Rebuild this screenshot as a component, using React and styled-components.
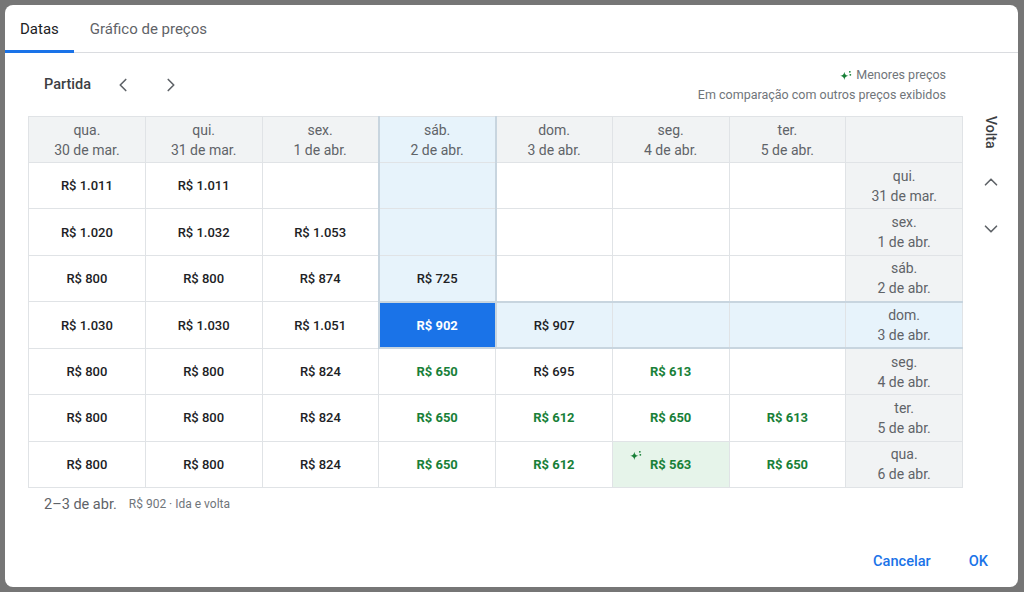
import React from 'react';
import styled, { createGlobalStyle, css } from 'styled-components';
import { ChevronLeft, ChevronRight, ChevronUp, ChevronDown } from 'lucide-react';

const Global = createGlobalStyle`
  html, body { margin: 0; padding: 0; background: #767676; }
  body { font-family: Roboto, "Noto Sans", Arial, sans-serif; }
  * { box-sizing: border-box; }
`;

const Page = styled.div`
  width: 1024px;
  height: 592px;
  padding: 5px 6px 5px 5px;
  background: #767676;
`;

const Dialog = styled.div`
  width: 1013px;
  height: 582px;
  background: #fff;
  border-radius: 8px;
  display: flex;
  flex-direction: column;
  overflow: hidden;
`;

const Tabs = styled.div`
  display: flex;
  height: 48px;
  border-bottom: 1px solid #dadce0;
`;

const Tab = styled.div`
  display: flex;
  align-items: center;
  padding: 2px ${p => (p.$first ? '15px' : '16px')} 0;
  margin-bottom: -1px;
  font-size: 15px;
  color: ${p => (p.$active ? '#202124' : '#5f6368')};
  border-bottom: 3px solid ${p => (p.$active ? '#1a73e8' : 'transparent')};
`;

const Content = styled.div`
  display: flex;
  padding-left: 23px;
`;

const Main = styled.div`
  width: 935px;
  display: flex;
  flex-direction: column;
`;

const TopBar = styled.div`
  height: 63px;
  display: flex;
  align-items: center;
  justify-content: space-between;
  padding: 0 17px 0 16px;
`;

const Nav = styled.div`
  display: flex;
  align-items: center;
`;

const NavLabel = styled.span`
  font-size: 14.5px;
  color: #3c4043;
  margin-right: 12px;
  font-weight: 500;
`;

const IconButton = styled.div`
  width: 40px;
  height: 40px;
  display: flex;
  align-items: center;
  justify-content: center;
  color: #5f6368;
  margin-left: ${p => p.$ml || 0}px;
  margin-top: ${p => p.$mt || 0}px;
`;

const Legend = styled.div`
  display: flex;
  flex-direction: column;
  align-items: flex-end;
  font-size: 12.5px;
  line-height: 20px;
  color: #70757a;
`;

const LegendTitle = styled.div`
  display: flex;
  align-items: center;
  gap: 4px;
`;

const Table = styled.table`
  width: 935px;
  table-layout: fixed;
  border-collapse: collapse;
`;

const Row = styled.tr`
  height: ${p => (p.$head ? 46 : 46.45)}px;
`;

const hlBorder = '2px solid #c8d5df';

const Cell = styled.td`
  position: relative;
  padding: 0;
  text-align: center;
  vertical-align: middle;
  border: 1px solid #e0e3e6;
  font-size: 13px;
  font-weight: 500;
  color: #202124;
  background: #fff;
  ${p => p.$label && css`
    background: #f1f3f4;
    font-size: 14px;
    font-weight: 400;
    line-height: 20px;
    color: #5f6368;
  `}
  ${p => p.$green && css`
    color: #188038;
    font-weight: 700;
  `}
  ${p => p.$low && css`
    background: #e6f4ea;
  `}
  ${p => p.$col && css`
    background: #e7f3fb;
    border-left: ${hlBorder};
    border-right: ${hlBorder};
  `}
  ${p => p.$row && css`
    background: #e7f3fb;
    border-top: ${hlBorder};
    border-bottom: ${hlBorder};
  `}
  ${p => p.$sel && css`
    background: #1a73e8;
    color: #fff;
    font-weight: 700;
  `}
`;

const Spark = styled.span`
  position: absolute;
  left: 17px;
  top: 8px;
  display: flex;
`;

const Footer = styled.div`
  height: 32px;
  display: flex;
  align-items: center;
  padding-left: 16px;
  gap: 12px;
`;

const FooterDates = styled.span`
  font-size: 14.5px;
  color: #5f6368;
`;

const FooterPrice = styled.span`
  font-size: 12px;
  color: #70757a;
`;

const Side = styled.div`
  width: 55px;
  padding-top: 63px;
  display: flex;
  flex-direction: column;
  align-items: center;
`;

const VoltaLabel = styled.div`
  writing-mode: vertical-rl;
  font-size: 14px;
  font-weight: 500;
  color: #3c4043;
  height: 36px;
  line-height: 20px;
`;

const Actions = styled.div`
  margin-top: auto;
  display: flex;
  justify-content: flex-end;
  gap: 22px;
  padding: 0 22px 8px 0;
`;

const TextButton = styled.div`
  height: 36px;
  padding: 0 8px;
  display: flex;
  align-items: center;
  font-size: 14.6px;
  font-weight: 500;
  color: #1a73e8;
`;

const Sparkle = ({ size = 12 }) => (
  <svg width={size + 2} height={size} viewBox="0 0 14 12" fill="#188038">
    <path d="M5 2 Q5.6 6.4 10 7 Q5.6 7.6 5 12 Q4.4 7.6 0 7 Q4.4 6.4 5 2Z" />
    <circle cx="11.6" cy="2.2" r="1.1" />
    <circle cx="12.2" cy="5.8" r="1.1" />
  </svg>
);

const cols = [
  ['qua.', '30 de mar.'],
  ['qui.', '31 de mar.'],
  ['sex.', '1 de abr.'],
  ['sáb.', '2 de abr.'],
  ['dom.', '3 de abr.'],
  ['seg.', '4 de abr.'],
  ['ter.', '5 de abr.'],
];

const G = s => ({ v: s, g: true });

const rows = [
  { d: ['qui.', '31 de mar.'], p: ['R$ 1.011', 'R$ 1.011', '', '', '', '', ''] },
  { d: ['sex.', '1 de abr.'], p: ['R$ 1.020', 'R$ 1.032', 'R$ 1.053', '', '', '', ''] },
  { d: ['sáb.', '2 de abr.'], p: ['R$ 800', 'R$ 800', 'R$ 874', 'R$ 725', '', '', ''] },
  { d: ['dom.', '3 de abr.'], p: ['R$ 1.030', 'R$ 1.030', 'R$ 1.051', 'R$ 902', 'R$ 907', '', ''], hl: true },
  { d: ['seg.', '4 de abr.'], p: ['R$ 800', 'R$ 800', 'R$ 824', G('R$ 650'), 'R$ 695', G('R$ 613'), ''] },
  { d: ['ter.', '5 de abr.'], p: ['R$ 800', 'R$ 800', 'R$ 824', G('R$ 650'), G('R$ 612'), G('R$ 650'), G('R$ 613')] },
  { d: ['qua.', '6 de abr.'], p: ['R$ 800', 'R$ 800', 'R$ 824', G('R$ 650'), G('R$ 612'), { v: 'R$ 563', g: true, low: true }, G('R$ 650')] },
];

const SEL_COL = 3;
const SEL_ROW = 3;

export default function App() {
  return (
    <Page>
      <Global />
      <Dialog>
        <Tabs>
          <Tab $first $active>Datas</Tab>
          <Tab>Gráfico de preços</Tab>
        </Tabs>
        <Content>
          <Main>
            <TopBar>
              <Nav>
                <NavLabel>Partida</NavLabel>
                <IconButton><ChevronLeft size={22} strokeWidth={1.8} /></IconButton>
                <IconButton $ml={8}><ChevronRight size={22} strokeWidth={1.8} /></IconButton>
              </Nav>
              <Legend>
                <LegendTitle><Sparkle size={10} />Menores preços</LegendTitle>
                <div>Em comparação com outros preços exibidos</div>
              </Legend>
            </TopBar>
            <Table>
              <tbody>
                <Row $head>
                  {cols.map((c, i) => (
                    <Cell as="th" key={i} $label $col={i === SEL_COL}>
                      {c[0]}<br />{c[1]}
                    </Cell>
                  ))}
                  <Cell as="th" $label />
                </Row>
                {rows.map((r, ri) => (
                  <Row key={ri}>
                    {r.p.map((raw, ci) => {
                      const cell = typeof raw === 'string' ? { v: raw } : raw;
                      const inCol = ci === SEL_COL && ri <= SEL_ROW;
                      const inRow = r.hl && ci >= SEL_COL;
                      const sel = ri === SEL_ROW && ci === SEL_COL;
                      return (
                        <Cell
                          key={ci}
                          $green={cell.g}
                          $low={cell.low}
                          $col={inCol}
                          $row={inRow}
                          $sel={sel}
                        >
                          {cell.low && <Spark><Sparkle size={10} /></Spark>}
                          {cell.v}
                        </Cell>
                      );
                    })}
                    <Cell $label $row={r.hl}>
                      {r.d[0]}<br />{r.d[1]}
                    </Cell>
                  </Row>
                ))}
              </tbody>
            </Table>
            <Footer>
              <FooterDates>2–3 de abr.</FooterDates>
              <FooterPrice>R$ 902 · Ida e volta</FooterPrice>
            </Footer>
          </Main>
          <Side>
            <VoltaLabel>Volta</VoltaLabel>
            <IconButton $mt={10}><ChevronUp size={22} strokeWidth={1.8} /></IconButton>
            <IconButton $mt={7}><ChevronDown size={22} strokeWidth={1.8} /></IconButton>
          </Side>
        </Content>
        <Actions>
          <TextButton>Cancelar</TextButton>
          <TextButton>OK</TextButton>
        </Actions>
      </Dialog>
    </Page>
  );
}
